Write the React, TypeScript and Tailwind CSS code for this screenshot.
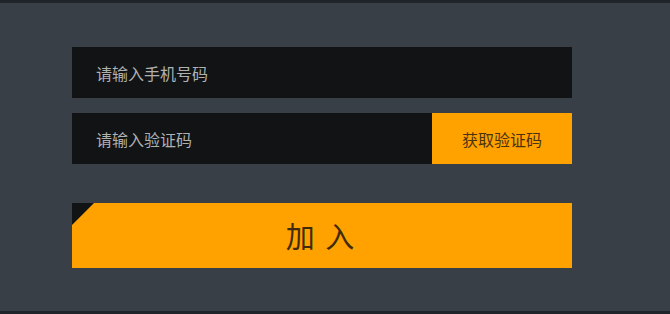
import { useState } from "react";

export default function App() {
    const [phone, setPhone] = useState("");
    const [code, setCode] = useState("");

    return (
        <div className="w-[670px] h-[314px] bg-[#1f242b] flex flex-col" style={{ fontFamily: '"Noto Sans CJK SC", "Noto Sans", sans-serif' }}>
            <div className="mt-[3px] mb-[3px] flex-1 bg-[#393f47] pt-[44px] pl-[72px]">
                <div className="w-[500px] flex flex-col">

                    {/* 手机号 */}
                    <input
                        value={phone}
                        onChange={(e) => setPhone(e.target.value)}
                        placeholder="请输入手机号码"
                        className="h-[51px] bg-[#111315] px-6 text-[16px] text-[#b5b5b5] placeholder:text-[#b0b0b0] outline-none"
                    />

                    {/* 验证码 */}
                    <div className="mt-[15px] flex h-[51px]">
                        <input
                            value={code}
                            onChange={(e) => setCode(e.target.value)}
                            placeholder="请输入验证码"
                            className="w-[360px] bg-[#111315] px-6 text-[16px] text-[#b5b5b5] placeholder:text-[#b0b0b0] outline-none"
                        />
                        <button className="flex-1 bg-[#ffa200] text-[16px] text-[#4a3310]">
                            获取验证码
                        </button>
                    </div>

                    {/* 加入 */}
                    <button className="relative mt-[39px] h-[65px] bg-[#ffa200] text-[29px] text-[#3f2b0c] tracking-[2px] pr-[2px]">
                        <span className="absolute left-0 top-0 w-0 h-0 border-t-[22px] border-r-[22px] border-t-[#111315] border-r-transparent" />
                        加 入
                    </button>

                </div>
            </div>
        </div>
    );
}
